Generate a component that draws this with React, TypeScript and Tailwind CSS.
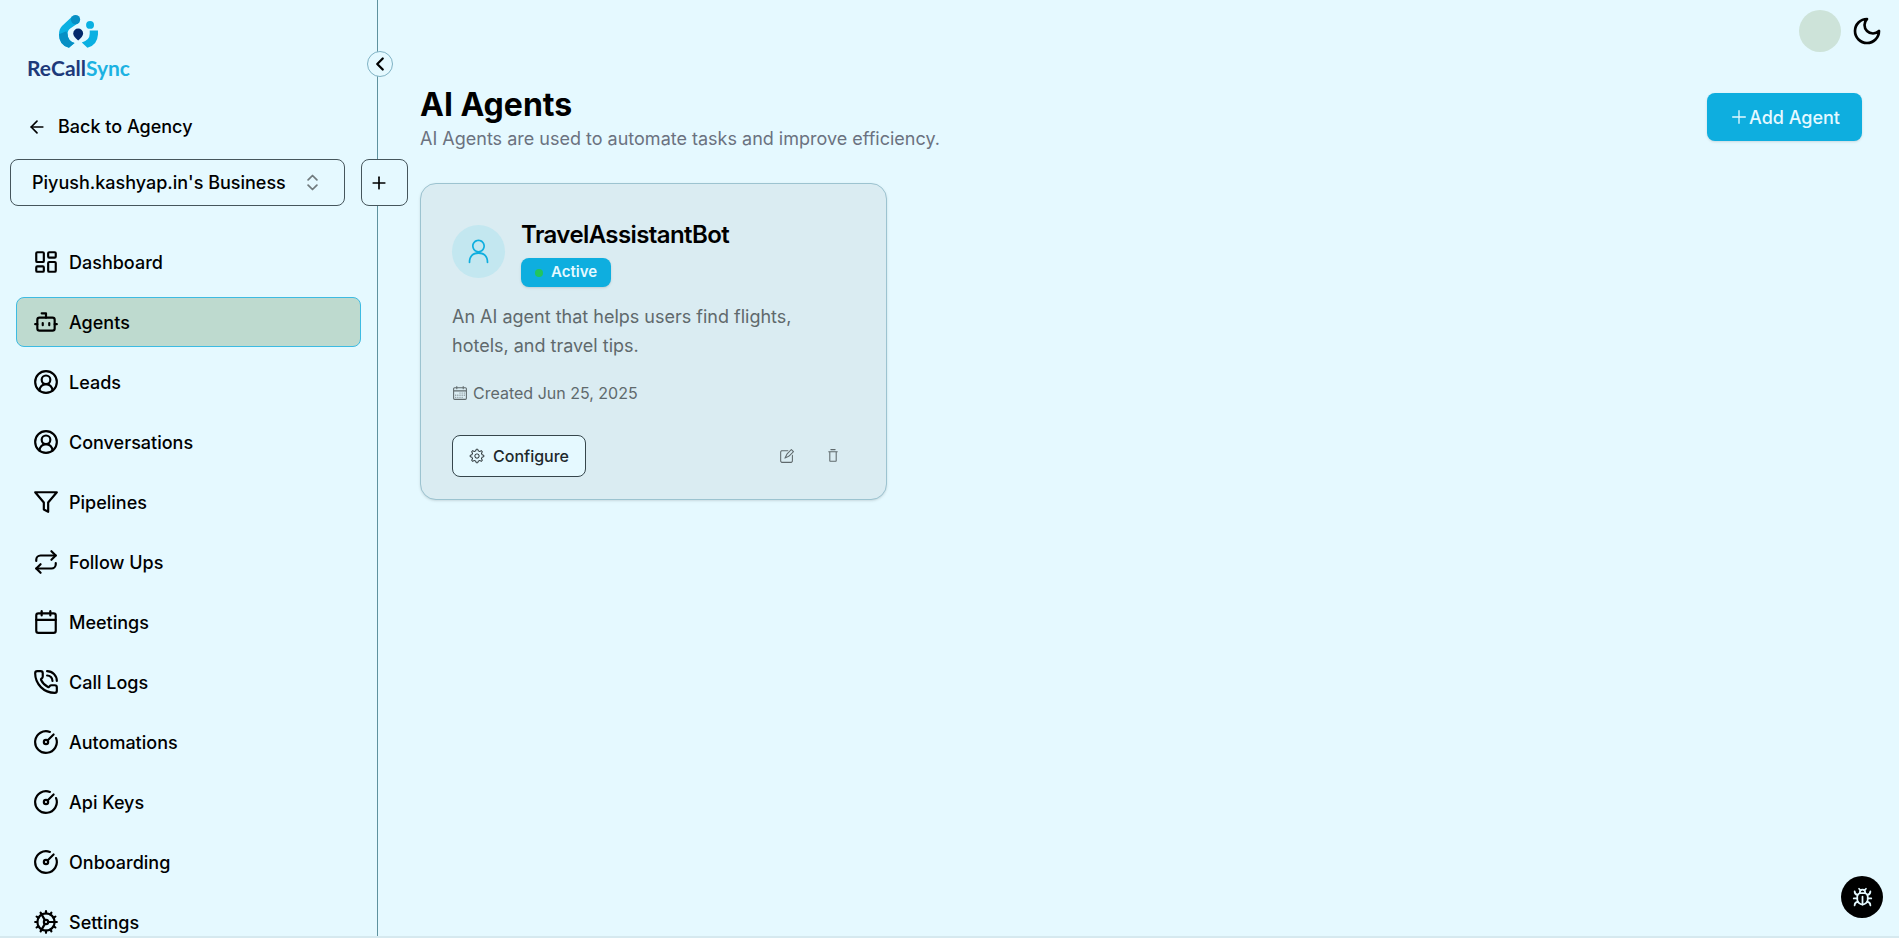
import {
  ArrowLeft,
  Bot,
  Bug,
  Calendar,
  ChevronLeft,
  ChevronsUpDown,
  CircleGauge,
  CircleUserRound,
  Cog,
  LayoutDashboard,
  PhoneCall,
  Plus,
  Repeat,
} from "lucide-react";
import { FiFilter } from "react-icons/fi";
import {
  RxCalendar,
  RxGear,
  RxPencil2,
  RxPerson,
  RxPlus,
  RxTrash,
} from "react-icons/rx";

const navItems = [
  { label: "Dashboard", icon: LayoutDashboard },
  { label: "Agents", icon: Bot },
  { label: "Leads", icon: CircleUserRound },
  { label: "Conversations", icon: CircleUserRound },
  { label: "Pipelines", icon: FiFilter },
  { label: "Follow Ups", icon: Repeat },
  { label: "Meetings", icon: Calendar },
  { label: "Call Logs", icon: PhoneCall },
  { label: "Automations", icon: CircleGauge },
  { label: "Api Keys", icon: CircleGauge },
  { label: "Onboarding", icon: CircleGauge },
  { label: "Settings", icon: Cog },
];

const agents = [
  {
    name: "TravelAssistantBot",
    status: "Active",
    description:
      "An AI agent that helps users find flights, hotels, and travel tips.",
    created: "Jun 25, 2025",
  },
];

function Logo() {
  return (
    <a
      href="#"
      className="ml-[26px] mt-[15px] flex w-[105px] flex-col items-center"
    >
      <svg viewBox="177 45 118 100" className="h-[33px] w-[39px]" aria-hidden>
        <path
          d="M216 50 L186 78 Q177 87 177 103 Q177 136 207 144 L224 130 Q203 122 203 103 Q203 91 211 86 L240 66 Z"
          fill="#0ab0e2"
        />
        <path
          d="M177 103 Q177 136 207 144 L224 130 Q203 122 203 103 L199 94 Z"
          fill="#078fc4"
        />
        <circle cx="227" cy="59" r="14" fill="#078fc4" />
        <circle cx="271" cy="75" r="12" fill="#0ab0e2" />
        <path
          d="M270 92 H295 V104 Q293 137 263 144 L246 128 Q270 122 270 102 Z"
          fill="#0ab0e2"
        />
        <path
          d="M235 86 a15 15 0 0 1 15 15 q0 9 -15 21 q-15 -12 -15 -21 a15 15 0 0 1 15 -15 Z"
          fill="#04296b"
        />
      </svg>
      <span className="mt-2 font-['Lato',sans-serif] text-[21px] leading-6 font-bold text-[#1d3a7a]">
        ReCall<span className="text-[#1cb2e2]">Sync</span>
      </span>
    </a>
  );
}

function Sidebar() {
  return (
    <aside className="relative flex h-screen w-[378px] shrink-0 flex-col border-r border-[#5f929f]">
      <Logo />
      <button
        type="button"
        aria-label="Collapse sidebar"
        className="absolute top-[51px] -right-4 flex size-[26px] items-center justify-center rounded-full border border-[#7fb2c4] bg-[#e5f9ff]"
      >
        <ChevronLeft size={22} strokeWidth={2.5} />
      </button>

      <a
        href="#"
        className="mt-[33px] ml-[27px] flex items-center gap-[11px] leading-7 font-medium"
      >
        <ArrowLeft size={20} />
        Back to Agency
      </a>

      <div className="mt-[18px] -mr-8 ml-[10px] flex gap-4">
        <div className="relative">
          <select
            aria-label="Business"
            className="h-[47px] w-[335px] appearance-none rounded-lg border border-[#46565c] bg-[#e5f9ff] px-[21px] font-medium"
          >
            <option>Piyush.kashyap.in's Business</option>
          </select>
          <ChevronsUpDown
            size={21}
            className="pointer-events-none absolute top-[13px] right-[22px] opacity-50"
          />
        </div>
        <button
          type="button"
          aria-label="Add business"
          className="z-10 flex h-[47px] w-[47px] items-center rounded-lg border border-[#46565c] bg-[#e5f9ff] pl-[7px]"
        >
          <Plus size={20} />
        </button>
      </div>

      <nav className="mt-[31px] flex min-h-0 flex-1 flex-col gap-[10px] overflow-y-auto px-4 [scrollbar-width:none]">
        {navItems.map(({ label, icon: Icon }) => (
          <a
            key={label}
            href="#"
            className={`flex h-[50px] shrink-0 items-center gap-[10px] rounded-lg border px-4 font-medium ${
              label === "Agents"
                ? "border-[#3dbbe2] bg-[#bedacf]"
                : "border-transparent"
            }`}
          >
            <Icon size={26} />
            {label}
          </a>
        ))}
      </nav>
    </aside>
  );
}

function AgentCard({ agent }: { agent: (typeof agents)[number] }) {
  return (
    <article className="rounded-2xl border border-[#9cc3d0] bg-[#daecf2] px-[31px] pt-9 pb-[22px] text-[#5f696c] shadow-sm">
      <div className="flex items-start gap-4">
        <div className="mt-[5px] flex size-[53px] items-center justify-center rounded-full bg-[#c3e7f0] text-[#0eaedf]">
          <RxPerson size={27} />
        </div>
        <div className="flex flex-col items-start gap-2">
          <h2 className="text-2xl leading-[30px] font-semibold tracking-tight text-black">
            {agent.name}
          </h2>
          <span className="inline-flex h-[29px] items-center gap-2 rounded-lg bg-[#0eaedf] px-[14px] text-[15px] font-semibold text-[#e5f9ff] shadow-sm">
            <span className="size-2 rounded-full bg-[#22c55e]" />
            {agent.status}
          </span>
        </div>
      </div>

      <p className="mt-[15px] pr-8 leading-[29px]">{agent.description}</p>

      <p className="mt-[21px] flex items-center gap-[5px] text-base leading-6">
        <RxCalendar size={16} />
        Created {agent.created}
      </p>

      <div className="mt-[30px] flex items-center justify-between">
        <button
          type="button"
          className="flex h-[42px] items-center gap-2 rounded-lg border border-[#36464c] bg-[#e5f9ff] px-4 text-base font-medium text-[#20282b]"
        >
          <RxGear size={16} />
          Configure
        </button>
        <div className="flex gap-[3px]">
          <button
            type="button"
            aria-label="Edit agent"
            className="flex h-9 w-11 items-center justify-center"
          >
            <RxPencil2 size={16} />
          </button>
          <button
            type="button"
            aria-label="Delete agent"
            className="flex h-9 w-11 items-center justify-center"
          >
            <RxTrash size={16} />
          </button>
        </div>
      </div>
    </article>
  );
}

export default function App() {
  return (
    <div className="flex min-h-screen bg-[#e5f9ff] font-['Inter',sans-serif] text-[18px] text-black">
      <Sidebar />

      <div className="min-w-0 flex-1">
        <header className="flex h-[61px] items-center justify-end gap-[10px] pr-4">
          <div className="size-[42px] rounded-full bg-[#cde3d9]" />
          <button type="button" aria-label="Toggle theme">
            <svg
              viewBox="0 0 24 24"
              className="size-8"
              fill="none"
              stroke="currentColor"
              strokeWidth="2"
              strokeLinecap="round"
              strokeLinejoin="round"
            >
              <path d="M12 3a6 6 0 0 0 9 9 9 9 0 1 1-9-9Z" />
            </svg>
          </button>
        </header>

        <main className="pt-6 pr-[37px] pl-[42px]">
          <div className="flex items-start justify-between">
            <div>
              <h1 className="text-[32px] leading-10 font-bold">AI Agents</h1>
              <p className="leading-7 text-[#6b7280]">
                AI Agents are used to automate tasks and improve efficiency.
              </p>
            </div>
            <button
              type="button"
              className="mt-2 flex h-12 items-center rounded-lg bg-[#0eaedf] px-[22px] font-medium text-[#e5f9ff] shadow-sm"
            >
              <RxPlus size={20} />
              Add Agent
            </button>
          </div>

          {/* Agents */}
          <div className="mt-[30px] grid grid-cols-3 gap-5">
            {agents.map((agent) => (
              <AgentCard key={agent.name} agent={agent} />
            ))}
          </div>
        </main>
      </div>

      <button
        type="button"
        aria-label="Report a bug"
        className="fixed right-4 bottom-5 flex size-[42px] items-center justify-center rounded-full bg-black text-[#e5f9ff]"
      >
        <Bug size={21} />
      </button>
      <div className="fixed inset-x-0 bottom-0 h-0.5 bg-[#d6e9ef]" />
    </div>
  );
}
